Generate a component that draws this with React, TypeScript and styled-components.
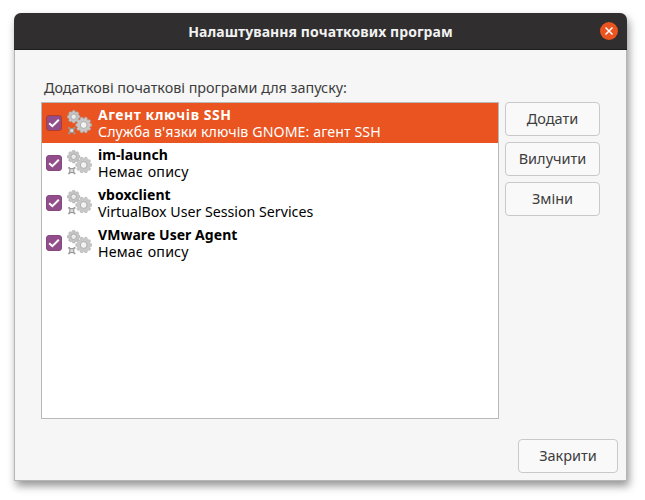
import React from "react";
import styled, { createGlobalStyle } from "styled-components";

const GlobalStyle = createGlobalStyle`
  html, body {
    margin: 0;
    height: 100%;
    background: #ffffff;
  }
  body {
    font-family: "Noto Sans", "Open Sans", sans-serif;
    font-size: 14px;
    color: #3d3d3d;
  }
`;

const Page = styled.div`
  width: 645px;
  height: 500px;
  padding: 13px 0 0 14px;
  box-sizing: border-box;
  overflow: hidden;
`;

const Window = styled.div`
  width: 613px;
  height: 468px;
  box-sizing: border-box;
  display: flex;
  flex-direction: column;
  background: #f6f6f6;
  border: 1px solid #b5b5b5;
  border-top: none;
  border-radius: 7px 7px 0 0;
  box-shadow: 2px 5px 9px rgba(0, 0, 0, 0.42);
`;

const TitleBar = styled.div`
  height: 37px;
  flex: none;
  margin: 0 -1px;
  display: flex;
  align-items: center;
  justify-content: center;
  position: relative;
  background: #302e2e;
  border-radius: 7px 7px 0 0;
  border-bottom: 1px solid #1f1e1e;
  box-sizing: border-box;
`;

const Title = styled.div`
  color: #f2f2f2;
  font-size: 14px;
  font-weight: 700;
  letter-spacing: 0.07px;
`;

const CloseDot = styled.button`
  position: absolute;
  right: 9px;
  top: 9px;
  width: 18px;
  height: 18px;
  padding: 0;
  border: none;
  border-radius: 50%;
  background: #e95420;
  display: flex;
  align-items: center;
  justify-content: center;
`;

const Body = styled.div`
  flex: 1;
  display: flex;
  flex-direction: column;
  padding: 27px 8px 7px 26px;
  min-height: 0;
`;

const Label = styled.div`
  height: 25px;
  line-height: 22px;
  padding-left: 3px;
  font-size: 14.33px;
  color: #3d3d3d;
`;

const Main = styled.div`
  display: flex;
  gap: 6px;
  align-items: flex-start;
`;

const List = styled.div`
  width: 458px;
  height: 317px;
  box-sizing: border-box;
  background: #ffffff;
  border: 1px solid #b9b9b9;
`;

const Row = styled.div<{ $selected?: boolean }>`
  height: 40px;
  display: flex;
  align-items: center;
  padding-left: 4px;
  background: ${(p) => (p.$selected ? "#e95420" : "transparent")};
  color: ${(p) => (p.$selected ? "#ffffff" : "#000000")};
`;

const Check = styled.span<{ $selected?: boolean }>`
  width: 16px;
  height: 16px;
  box-sizing: border-box;
  flex: none;
  border-radius: 3px;
  background: #924d8b;
  border: 1px solid ${(p) => (p.$selected ? "#b03c2c" : "#87467f")};
  display: flex;
  align-items: center;
  justify-content: center;
`;

const GearSlot = styled.span`
  width: 26px;
  height: 26px;
  margin-left: 5px;
  flex: none;
  display: flex;
`;

const RowText = styled.div`
  margin-left: 5px;
  line-height: 17px;
  white-space: nowrap;
`;

const RowName = styled.div<{ $tracking: number }>`
  font-weight: 700;
  font-size: 14px;
  letter-spacing: ${(p) => p.$tracking}px;
`;

const RowDesc = styled.div<{ $tracking: number; $wordGap: number }>`
  font-size: 14.2px;
  letter-spacing: ${(p) => p.$tracking}px;
  word-spacing: ${(p) => p.$wordGap}px;
`;

const Side = styled.div`
  display: flex;
  flex-direction: column;
  gap: 6px;
`;

const Button = styled.button`
  width: 95px;
  height: 34px;
  padding: 0 0 2px;
  box-sizing: border-box;
  font-family: inherit;
  font-size: 14.5px;
  color: #3d3d3d;
  background: #f9f9f9;
  border: 1px solid #c9c9c9;
  border-radius: 4px;
`;

const Footer = styled.div`
  margin-top: auto;
  display: flex;
  justify-content: flex-end;
`;

const CloseButton = styled(Button)`
  width: 100px;
`;

// gear outline with square-ish teeth
const gearPath = (cx: number, cy: number, outer: number, root: number, teeth: number) => {
  const step = (Math.PI * 2) / teeth;
  const pts: string[] = [];
  for (let i = 0; i < teeth; i++) {
    const a = i * step;
    const at = (r: number, t: number) =>
      `${(cx + r * Math.cos(a + t * step)).toFixed(2)} ${(cy + r * Math.sin(a + t * step)).toFixed(2)}`;
    pts.push(at(root, -0.34), at(outer, -0.24), at(outer, 0.24), at(root, 0.34));
  }
  return `M${pts.join("L")}Z`;
};

const Gears: React.FC = () => (
  <svg width="26" height="26" viewBox="0 0 26 26">
    <path d={gearPath(6.7, 6.7, 6.3, 5.2, 8)} fill="#c4c4c4" stroke="#a6a6a6" strokeWidth="0.5" />
    <circle cx="6.7" cy="6.7" r="2.7" fill="#ececec" stroke="#9a9a9a" strokeWidth="0.7" />
    <path d={gearPath(16.7, 15, 8, 6.6, 10)} fill="#c8c8c8" stroke="#aaaaaa" strokeWidth="0.5" />
    <circle cx="16.7" cy="15" r="3.4" fill="#f2f2f2" stroke="#a0a0a0" strokeWidth="0.8" />
    <rect x="2.8" y="18.6" width="4" height="4" fill="#dcdcdc" stroke="#969696" strokeWidth="1.1" />
    <path d="M1.2 17h1.8v1.8H1.2zM6.6 17h1.8v1.8H6.6zM1.2 22.4h1.8v1.8H1.2zM6.6 22.4h1.8v1.8H6.6z" fill="#999999" />
  </svg>
);

const Tick: React.FC = () => (
  <svg width="12" height="12" viewBox="0 0 12 12">
    <path d="M1.2 6.2l3.2 3L10.8 2.8" fill="none" stroke="#ffffff" strokeWidth="2" />
  </svg>
);

const items = [
  { name: "Агент ключів SSH", desc: "Служба в'язки ключів GNOME: агент SSH", selected: true, nameTrack: 0.55, descTrack: 0.08, wordGap: 0 },
  { name: "im-launch", desc: "Немає опису", nameTrack: 0.05, descTrack: 0.16, wordGap: 1 },
  { name: "vboxclient", desc: "VirtualBox User Session Services", nameTrack: 0.05, descTrack: 0, wordGap: 0 },
  { name: "VMware User Agent", desc: "Немає опису", nameTrack: 0.05, descTrack: 0.16, wordGap: 1 },
];

const App: React.FC = () => (
  <>
    <GlobalStyle />
    <Page>
      <Window>
        <TitleBar>
          <Title>Налаштування початкових програм</Title>
          <CloseDot aria-label="Закрити">
            <svg width="10" height="10" viewBox="0 0 10 10">
              <path d="M1.5 1.5l7 7M8.5 1.5l-7 7" stroke="#ffffff" strokeWidth="1.5" />
            </svg>
          </CloseDot>
        </TitleBar>
        <Body>
          <Label>Додаткові початкові програми для запуску:</Label>
          <Main>
            <List>
              {items.map((item) => (
                <Row key={item.name} $selected={item.selected}>
                  <Check $selected={item.selected}>
                    <Tick />
                  </Check>
                  <GearSlot>
                    <Gears />
                  </GearSlot>
                  <RowText>
                    <RowName $tracking={item.nameTrack}>{item.name}</RowName>
                    <RowDesc $tracking={item.descTrack} $wordGap={item.wordGap}>
                      {item.desc}
                    </RowDesc>
                  </RowText>
                </Row>
              ))}
            </List>
            <Side>
              <Button>Додати</Button>
              <Button>Вилучити</Button>
              <Button>Зміни</Button>
            </Side>
          </Main>
          <Footer>
            <CloseButton>Закрити</CloseButton>
          </Footer>
        </Body>
      </Window>
    </Page>
  </>
);

export default App;
